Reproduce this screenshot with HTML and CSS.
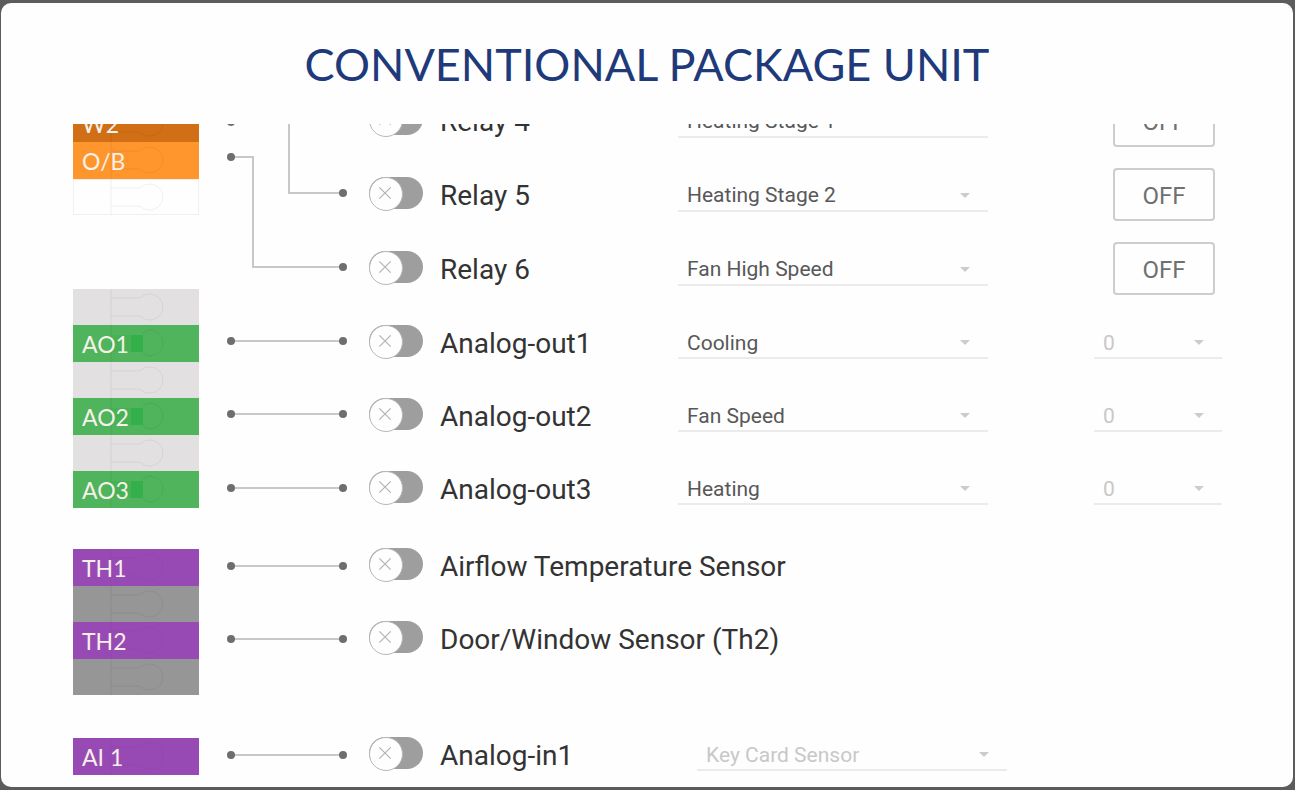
FILE: index.html
```
<!DOCTYPE html>
<html lang="en">
<head>
  <meta charset="UTF-8" />
  <meta name="viewport" content="width=device-width, initial-scale=1.0"/>
  <title>Conventional Package Unit</title>
  <link rel="stylesheet" href="styles.css">
</head>
<body>

  <!-- Shared shapes -->
  <svg class="defs" aria-hidden="true">
    <symbol id="slot" viewBox="0 0 126 36">
      <path d="M38 0V36M38 9H64C70 9 69 5 77 5A13 13 0 0 1 77 31C69 31 70 27 64 27H38" fill="none" stroke="currentColor"/>
    </symbol>
    <symbol id="slot-on" viewBox="0 0 126 36">
      <rect x="38" y="10" width="20" height="17" fill="#33b04a" opacity="0.3"/>
      <rect x="58" y="10" width="12" height="17" fill="#33b04a"/>
      <path d="M38 0V36M70 9C72 6 74 5 77 5A13 13 0 0 1 77 31C74 31 72 30 70 27" fill="none" stroke="currentColor"/>
    </symbol>
    <symbol id="cross" viewBox="0 0 31 31">
      <path d="M10 10L21 21M21 10L10 21" fill="none" stroke="#b4b4b4" stroke-width="1.2"/>
    </symbol>
  </svg>

  <main class="dialog">
    <h1>CONVENTIONAL PACKAGE UNIT</h1>

    <div class="scroller">
      <div class="board">

        <!-- Terminal strip -->
        <div class="terminals">
          <div class="terminal brown"><svg><use href="#slot"/></svg><span>W2</span></div>
          <div class="terminal orange"><svg><use href="#slot"/></svg><span>O/B</span></div>
          <div class="terminal empty"><svg><use href="#slot"/></svg></div>

          <div class="terminal light analog-start"><svg><use href="#slot"/></svg></div>
          <div class="terminal green"><svg><use href="#slot-on"/></svg><span>AO1</span></div>
          <div class="terminal light"><svg><use href="#slot"/></svg></div>
          <div class="terminal green"><svg><use href="#slot-on"/></svg><span>AO2</span></div>
          <div class="terminal light"><svg><use href="#slot"/></svg></div>
          <div class="terminal green"><svg><use href="#slot-on"/></svg><span>AO3</span></div>

          <div class="terminal purple sensor-start"><svg><use href="#slot"/></svg><span>TH1</span></div>
          <div class="terminal dark"><svg><use href="#slot"/></svg></div>
          <div class="terminal purple"><svg><use href="#slot"/></svg><span>TH2</span></div>
          <div class="terminal dark"><svg><use href="#slot"/></svg></div>

          <div class="terminal purple input-start"><svg><use href="#slot"/></svg><span>AI 1</span></div>
        </div>

        <!-- Wires from terminals to ports -->
        <svg class="wires" width="126" height="700" viewBox="0 0 126 700" aria-hidden="true">
          <g class="wire">
            <path d="M6 39H64V110H118"/>
            <path d="M6 74H28V184H118"/>
            <path d="M6 258H118"/>
            <path d="M6 331H118"/>
            <path d="M6 405H118"/>
            <path d="M6 483H118"/>
            <path d="M6 556H118"/>
            <path d="M6 672H118"/>
          </g>
          <g class="dot">
            <circle cx="6" cy="39" r="4"/>
            <circle cx="6" cy="74" r="4"/>
            <circle cx="118" cy="110" r="4"/>
            <circle cx="118" cy="184" r="4"/>
            <circle cx="6" cy="258" r="4"/><circle cx="118" cy="258" r="4"/>
            <circle cx="6" cy="331" r="4"/><circle cx="118" cy="331" r="4"/>
            <circle cx="6" cy="405" r="4"/><circle cx="118" cy="405" r="4"/>
            <circle cx="6" cy="483" r="4"/><circle cx="118" cy="483" r="4"/>
            <circle cx="6" cy="556" r="4"/><circle cx="118" cy="556" r="4"/>
            <circle cx="6" cy="672" r="4"/><circle cx="118" cy="672" r="4"/>
          </g>
        </svg>

        <!-- Ports -->
        <div class="ports">
          <div class="group relays">
            <div class="row">
              <div class="toggle"><input type="checkbox" id="relay4"><svg><use href="#cross"/></svg></div>
              <label class="name" for="relay4">Relay 4</label>
              <div class="select"><select aria-label="Relay 4 function"><option>Heating Stage 1</option></select></div>
              <div class="control"><button type="button">OFF</button></div>
            </div>
            <div class="row">
              <div class="toggle"><input type="checkbox" id="relay5"><svg><use href="#cross"/></svg></div>
              <label class="name" for="relay5">Relay 5</label>
              <div class="select"><select aria-label="Relay 5 function"><option>Heating Stage 2</option></select></div>
              <div class="control"><button type="button">OFF</button></div>
            </div>
            <div class="row">
              <div class="toggle"><input type="checkbox" id="relay6"><svg><use href="#cross"/></svg></div>
              <label class="name" for="relay6">Relay 6</label>
              <div class="select"><select aria-label="Relay 6 function"><option>Fan High Speed</option></select></div>
              <div class="control"><button type="button">OFF</button></div>
            </div>
          </div>

          <div class="group">
            <div class="row">
              <div class="toggle"><input type="checkbox" id="out1"><svg><use href="#cross"/></svg></div>
              <label class="name" for="out1">Analog-out1</label>
              <div class="select"><select aria-label="Analog-out1 function"><option>Cooling</option></select></div>
              <div class="control select"><select aria-label="Analog-out1 value" disabled><option>0</option></select></div>
            </div>
            <div class="row">
              <div class="toggle"><input type="checkbox" id="out2"><svg><use href="#cross"/></svg></div>
              <label class="name" for="out2">Analog-out2</label>
              <div class="select"><select aria-label="Analog-out2 function"><option>Fan Speed</option></select></div>
              <div class="control select"><select aria-label="Analog-out2 value" disabled><option>0</option></select></div>
            </div>
            <div class="row">
              <div class="toggle"><input type="checkbox" id="out3"><svg><use href="#cross"/></svg></div>
              <label class="name" for="out3">Analog-out3</label>
              <div class="select"><select aria-label="Analog-out3 function"><option>Heating</option></select></div>
              <div class="control select"><select aria-label="Analog-out3 value" disabled><option>0</option></select></div>
            </div>
          </div>

          <div class="group sensors">
            <div class="row wide">
              <div class="toggle"><input type="checkbox" id="th1"><svg><use href="#cross"/></svg></div>
              <label class="name" for="th1">Airflow Temperature Sensor</label>
            </div>
            <div class="row wide">
              <div class="toggle"><input type="checkbox" id="th2"><svg><use href="#cross"/></svg></div>
              <label class="name" for="th2">Door/Window Sensor (Th2)</label>
            </div>
          </div>

          <div class="group inputs">
            <div class="row">
              <div class="toggle"><input type="checkbox" id="in1"><svg><use href="#cross"/></svg></div>
              <label class="name" for="in1">Analog-in1</label>
              <div class="select"><select aria-label="Analog-in1 function" disabled><option>Key Card Sensor</option></select></div>
            </div>
          </div>
        </div>

      </div>
    </div>
  </main>

</body>
</html>
```
FILE: styles.css
```
* {
  box-sizing: border-box;
}

body {
  margin: 0;
  height: 100vh;
  padding: 3px 2px 3px 1px;
  background: #5c5c5c;
  font-family: Roboto, "Liberation Sans", sans-serif;
  color: #333;
}

.defs {
  position: absolute;
  width: 0;
  height: 0;
}

.dialog {
  display: flex;
  flex-direction: column;
  height: 100%;
  background: #fefefe;
  border-radius: 10px;
  overflow: hidden;
}

h1 {
  margin: 0;
  padding-top: 31px;
  height: 121px;
  flex: none;
  font-family: Lato, sans-serif;
  font-size: 45px;
  font-weight: 400;
  line-height: 60px;
  text-align: center;
  color: #1f3a7a;
}

.scroller {
  flex: 1;
  min-height: 0;
  overflow: hidden;
}

/* the list is scrolled part of a row down */
.board {
  display: flex;
  margin-top: -41px;
  padding: 0 71px 0 72px;
}

/* Terminal strip */
.terminals {
  flex: none;
  width: 126px;
  padding-top: 22px;
}

.terminal {
  position: relative;
  height: 37px;
  padding-left: 9px;
  font-family: Lato, sans-serif;
  font-size: 23px;
  line-height: 38px;
  color: #f6f0ea;
}

.terminal svg {
  position: absolute;
  top: 0;
  left: 0;
  width: 126px;
  height: 36px;
  color: rgba(0, 0, 0, 0.06);
}

.terminal span {
  position: relative;
}

.brown {
  background: #d06f15;
}

.orange {
  background: #ff962d;
}

.green {
  background: #4fb45b;
}

.purple {
  background: #984ab4;
}

.purple svg {
  color: rgba(0, 0, 0, 0.03);
}

.light {
  height: 36px;
  background: #e2e0e1;
}

.dark {
  height: 36px;
  background: #969696;
}

.empty {
  height: 36px;
  box-shadow: inset 0 0 0 1px #f0f0f0;
}

.analog-start {
  margin-top: 74px;
}

.sensor-start {
  margin-top: 41px;
}

.input-start {
  margin-top: 43px;
}

/* Wires */
.wires {
  flex: none;
  margin: 0 18px 0 26px;
}

.wire {
  fill: none;
  stroke: #c8c8c8;
  stroke-width: 2;
}

.dot {
  fill: #6e6e6e;
}

/* Ports */
.ports {
  flex: 1;
}

.row {
  display: grid;
  grid-template-columns: 71px 238px 310px 1fr;
  align-items: center;
  height: 73px;
}

.row.wide {
  grid-template-columns: 71px 1fr;
}

.relays .row {
  height: 74px;
}

.sensors {
  margin-top: 4px;
}

.inputs {
  margin-top: 43px;
}

.inputs .row {
  grid-template-columns: 71px 257px 310px 1fr;
}

.toggle {
  position: relative;
  width: 54px;
  height: 32px;
  margin-bottom: 2px;
}

.toggle input {
  appearance: none;
  display: block;
  width: 54px;
  height: 32px;
  margin: 0;
  border-radius: 16px;
  background: #9e9e9e;
}

.toggle input::before {
  content: "";
  display: block;
  width: 32px;
  height: 32px;
  border: 1px solid #b8b8b8;
  border-radius: 50%;
  background: #fefefe;
}

.toggle svg {
  position: absolute;
  top: 0;
  left: 0;
  width: 32px;
  height: 32px;
  pointer-events: none;
}

.name {
  padding-top: 4px;
  font-size: 28px;
  line-height: 34px;
  white-space: nowrap;
}

.select {
  position: relative;
}

.select::after {
  content: "";
  position: absolute;
  top: 16px;
  right: 18px;
  border: 5px solid transparent;
  border-top-color: #ccc;
  border-bottom: 0;
  pointer-events: none;
}

select {
  appearance: none;
  display: block;
  width: 100%;
  height: 35px;
  padding: 4px 40px 0 9px;
  border: 0;
  border-bottom: 2px solid #ebebeb;
  border-radius: 0;
  background: none;
  font-family: inherit;
  font-size: 21px;
  color: #585858;
}

select:disabled {
  color: #c8c8c8;
  opacity: 1;
}

.control {
  justify-self: end;
  width: 128px;
}

button {
  display: block;
  width: 102px;
  height: 53px;
  margin-left: 19px;
  padding: 4px 0 0;
  border: 2px solid #cdcdcd;
  border-radius: 4px;
  background: #fefefe;
  font-family: inherit;
  font-size: 24px;
  color: #707070;
}
```
